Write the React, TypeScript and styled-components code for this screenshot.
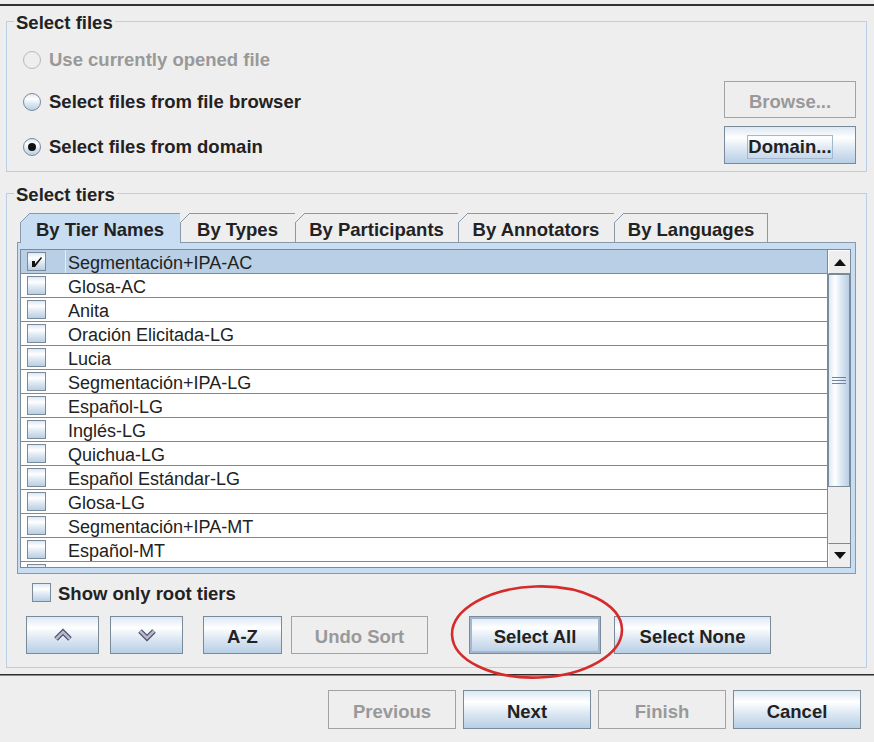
import React from "react";
import styled, { createGlobalStyle } from "styled-components";

const FONT = `"Liberation Sans", Arial, sans-serif`;
const LINE = "#8a99a9";
const DARK = "#7a8a99";
const GRAD = "#dde8f3 0%, #ffffff 30%, #dde8f3 60%, #b8cfe5 100%";

const GlobalStyle = createGlobalStyle`
  html, body { margin: 0; padding: 0; background: #eeeeee; }
  body { font-family: ${FONT}; }
  * { box-sizing: border-box; }
`;

const Page = styled.div`
  position: relative;
  width: 874px;
  height: 742px;
  background: #eeeeee;
  display: flex;
  flex-direction: column;
  color: #222222;
  overflow: hidden;
  font-family: ${FONT};
`;

const TopRule = styled.div`
  margin-top: 4px;
  height: 2px;
  background: #333333;
`;

const Main = styled.div`
  display: flex;
  flex-direction: column;
  padding: 0 7px 0 6px;
`;

const Group = styled.section<{ $mt: number }>`
  margin-top: ${(p) => p.$mt}px;
  border: 1px solid #b8cfe5;
  display: flex;
  flex-direction: column;
`;

const GroupTitle = styled.div`
  align-self: flex-start;
  margin: -11px 0 0 7px;
  padding: 2px 2px 0;
  height: 22px;
  background: linear-gradient(#eeeeee, #eeeeee) 0 0 / 100% 20px no-repeat;
  font: bold 18.5px/20px ${FONT};
  color: #222222;
`;

const FilesBody = styled.div`
  display: grid;
  grid-template-columns: 1fr 132px;
  grid-template-rows: 33px 37px 39px;
  row-gap: 7px;
  padding: 8px 10px 7px 16px;
  align-items: center;
`;

const RadioLabel = styled.label<{ $disabled?: boolean }>`
  grid-column: 1;
  display: flex;
  align-items: center;
  gap: 8px;
  padding-top: 4px;
  font: bold 18.5px/20px ${FONT};
  color: ${(p) => (p.$disabled ? "#999999" : "#222222")};
`;

const RadioDot = styled.span<{ $checked?: boolean; $disabled?: boolean }>`
  width: 18px;
  height: 18px;
  border-radius: 50%;
  border: 1px solid ${(p) => (p.$disabled ? "#b8b8b8" : DARK)};
  background: ${(p) => (p.$disabled ? "#eeeeee" : `linear-gradient(${GRAD})`)};
  display: flex;
  align-items: center;
  justify-content: center;
  &::after {
    content: "";
    width: 8px;
    height: 8px;
    border-radius: 50%;
    background: #111111;
    display: ${(p) => (p.$checked ? "block" : "none")};
  }
`;

const Button = styled.button<{ $w: number; $h?: number; $ring?: boolean }>`
  width: ${(p) => p.$w}px;
  height: ${(p) => p.$h ?? 38}px;
  padding: 4px 0 0;
  border: 1px solid ${DARK};
  border-radius: 0;
  background: linear-gradient(${GRAD});
  box-shadow: ${(p) => (p.$ring ? "inset 0 0 0 2px #a3b8cc" : "none")};
  font: bold 18.5px/20px ${FONT};
  color: #222222;
  display: flex;
  align-items: center;
  justify-content: center;
  &:disabled {
    background: #eeeeee;
    border-color: #a3a3a3;
    color: #999999;
  }
`;

const IconButton = styled(Button)`
  padding: 0;
`;

const FocusText = styled.span`
  border: 1px solid #a3b8cc;
  padding: 1px 0 1px;
  line-height: 20px;
`;

const SideButton = styled(Button)`
  grid-column: 2;
  justify-self: end;
  align-self: end;
`;

const TabPane = styled.div`
  margin: 8px 10px 0 10px;
  display: flex;
  flex-direction: column;
`;

const TabStrip = styled.div`
  display: flex;
  align-items: flex-start;
  height: 29px;
  padding-left: 3px;
`;

const tabBg = (selected?: boolean, last?: boolean) => {
  const fill = selected ? "#c8ddf2" : "#eeeeee";
  const layers = [
    `linear-gradient(${LINE}, ${LINE}) 10px 0 / 100% 1px no-repeat`,
    `linear-gradient(${LINE}, ${LINE}) 0 10px / 1px 100% no-repeat`,
  ];
  if (last) layers.push(`linear-gradient(${LINE}, ${LINE}) 100% 0 / 1px 100% no-repeat`);
  layers.push(
    `linear-gradient(135deg, transparent 6.6px, ${LINE} 6.6px, ${LINE} 7.7px, ${fill} 7.7px)`
  );
  return layers.join(", ");
};

const Tab = styled.div<{ $w: number; $selected?: boolean; $last?: boolean }>`
  position: relative;
  z-index: ${(p) => (p.$selected ? 1 : 0)};
  width: ${(p) => p.$w}px;
  height: ${(p) => (p.$selected ? 30 : 29)}px;
  padding-top: 4px;
  display: flex;
  align-items: center;
  justify-content: center;
  font: bold 18.5px/20px ${FONT};
  color: #222222;
  background: ${(p) => tabBg(p.$selected, p.$last)};
`;

const TabContent = styled.div`
  border: 1px solid ${LINE};
  background: #c8ddf2;
  padding: 6px 4px 5px 2px;
`;

const ScrollPane = styled.div`
  border: 1px solid ${DARK};
  height: 319px;
  display: flex;
  background: #ffffff;
`;

const RowList = styled.div`
  flex: 1;
  overflow: hidden;
  display: flex;
  flex-direction: column;
`;

const Row = styled.div<{ $selected?: boolean }>`
  flex-shrink: 0;
  height: 24px;
  display: flex;
  border-bottom: 1px solid ${DARK};
  background: ${(p) => (p.$selected ? "#b8cfe5" : "#ffffff")};
`;

const CheckCell = styled.div`
  width: 44px;
  display: flex;
  align-items: center;
  padding-left: 6px;
`;

const NameCell = styled.div<{ $selected?: boolean }>`
  flex: 1;
  display: flex;
  align-items: center;
  padding: 2px 0 0 2px;
  border-left: 1px solid ${(p) => (p.$selected ? "#e4eef8" : "transparent")};
  font: 18px/20px ${FONT};
  color: #222222;
`;

const Box = styled.span`
  width: 19px;
  height: 19px;
  flex-shrink: 0;
  border: 1px solid ${DARK};
  background: linear-gradient(${GRAD});
  display: flex;
  align-items: center;
  justify-content: center;
`;

const VScroll = styled.div`
  width: 23px;
  border-left: 1px solid ${DARK};
  display: flex;
  flex-direction: column;
  background: #eeeeee;
`;

const ScrollBtn = styled.div<{ $top?: boolean }>`
  height: 24px;
  flex-shrink: 0;
  display: flex;
  align-items: center;
  justify-content: center;
  background: #eeeeee;
  border-top: 1px solid ${(p) => (p.$top ? "#ffffff" : DARK)};
  border-left: 1px solid #ffffff;
  border-bottom: 1px solid ${(p) => (p.$top ? DARK : "transparent")};
`;

const Thumb = styled.div`
  height: 213px;
  flex-shrink: 0;
  border: 1px solid ${DARK};
  background: linear-gradient(to right, ${GRAD});
  display: flex;
  flex-direction: column;
  align-items: center;
  justify-content: center;
  gap: 2px;
`;

const Grip = styled.span`
  width: 14px;
  height: 1px;
  background: #6f84a0;
`;

const Track = styled.div`
  flex: 1;
  background: #eeeeee;
`;

const RootRow = styled.label`
  margin: 9px 0 0 25px;
  height: 19px;
  display: flex;
  align-items: center;
  gap: 7px;
  font: bold 18.5px/20px ${FONT};
  color: #222222;
`;

const RootText = styled.span`
  padding-top: 2px;
`;

const Toolbar = styled.div`
  display: flex;
  margin: 14px 0 13px 19px;
`;

const ToolGroup = styled.div<{ $gap: number; $ml?: number }>`
  display: flex;
  gap: ${(p) => p.$gap}px;
  margin-left: ${(p) => p.$ml ?? 0}px;
`;

const Separator = styled.div`
  margin-top: 6px;
  height: 1px;
  background: #2e2e2e;
  box-shadow: 0 1px 0 #8c8c8c;
`;

const Footer = styled.div`
  display: flex;
  justify-content: flex-end;
  gap: 7px;
  padding: 15px 13px 0 0;
`;

const Annotation = styled.svg`
  position: absolute;
  left: 448px;
  top: 584px;
  pointer-events: none;
`;

const Tick = () => (
  <svg width="13" height="13" viewBox="0 0 13 13">
    <path d="M2 6 L5 6 L5 9 L11 2 L12 3 L5 12 L2 12 Z" fill="#111" />
  </svg>
);

const ArrowUp = () => (
  <svg width="12" height="7" viewBox="0 0 12 7">
    <path d="M0 7 L6 0 L12 7 Z" fill="#111" />
  </svg>
);

const ArrowDown = () => (
  <svg width="12" height="7" viewBox="0 0 12 7">
    <path d="M0 0 L12 0 L6 7 Z" fill="#111" />
  </svg>
);

const Chevron = ({ up }: { up?: boolean }) => (
  <svg width="20" height="14" viewBox="0 0 20 14">
    <g transform={up ? undefined : "translate(0 14) scale(1 -1)"}>
      <polyline points="3,11 10,4 17,11" fill="none" stroke="#4d4d5e" strokeWidth="5" strokeLinejoin="miter" />
      <polyline points="3,11 10,4 17,11" fill="none" stroke="#b7b7d6" strokeWidth="2.6" strokeLinejoin="miter" />
    </g>
  </svg>
);

const tiers = [
  "Segmentación+IPA-AC",
  "Glosa-AC",
  "Anita",
  "Oración Elicitada-LG",
  "Lucia",
  "Segmentación+IPA-LG",
  "Español-LG",
  "Inglés-LG",
  "Quichua-LG",
  "Español Estándar-LG",
  "Glosa-LG",
  "Segmentación+IPA-MT",
  "Español-MT",
  "",
];

const tabs = [
  { label: "By Tier Names", w: 160 },
  { label: "By Types", w: 115 },
  { label: "By Participants", w: 163 },
  { label: "By Annotators", w: 156 },
  { label: "By Languages", w: 154 },
];

export default function App() {
  return (
    <Page>
      <GlobalStyle />
      <TopRule />
      <Main>
        <Group $mt={15}>
          <GroupTitle>Select files</GroupTitle>
          <FilesBody>
            <RadioLabel $disabled>
              <RadioDot $disabled />
              Use currently opened file
            </RadioLabel>
            <RadioLabel>
              <RadioDot />
              Select files from file browser
            </RadioLabel>
            <SideButton $w={132} $h={37} disabled>
              Browse...
            </SideButton>
            <RadioLabel>
              <RadioDot $checked />
              Select files from domain
            </RadioLabel>
            <SideButton $w={132} $h={38}>
              <FocusText>Domain...</FocusText>
            </SideButton>
          </FilesBody>
        </Group>

        <Group $mt={21}>
          <GroupTitle>Select tiers</GroupTitle>
          <TabPane>
            <TabStrip>
              {tabs.map((t, i) => (
                <Tab key={t.label} $w={t.w} $selected={i === 0} $last={i === tabs.length - 1}>
                  {t.label}
                </Tab>
              ))}
            </TabStrip>
            <TabContent>
              <ScrollPane>
                <RowList>
                  {tiers.map((name, i) => (
                    <Row key={i} $selected={i === 0}>
                      <CheckCell>
                        <Box>{i === 0 ? <Tick /> : null}</Box>
                      </CheckCell>
                      <NameCell $selected={i === 0}>{name}</NameCell>
                    </Row>
                  ))}
                </RowList>
                <VScroll>
                  <ScrollBtn $top>
                    <ArrowUp />
                  </ScrollBtn>
                  <Thumb>
                    <Grip />
                    <Grip />
                    <Grip />
                  </Thumb>
                  <Track />
                  <ScrollBtn>
                    <ArrowDown />
                  </ScrollBtn>
                </VScroll>
              </ScrollPane>
            </TabContent>
          </TabPane>
          <RootRow>
            <Box />
            <RootText>Show only root tiers</RootText>
          </RootRow>
          <Toolbar>
            <ToolGroup $gap={11}>
              <IconButton $w={73}>
                <Chevron up />
              </IconButton>
              <IconButton $w={73}>
                <Chevron />
              </IconButton>
            </ToolGroup>
            <ToolGroup $gap={9} $ml={20}>
              <Button $w={79}>A-Z</Button>
              <Button $w={137} disabled>
                Undo Sort
              </Button>
            </ToolGroup>
            <ToolGroup $gap={13} $ml={41}>
              <Button $w={132} $ring>
                Select All
              </Button>
              <Button $w={157}>Select None</Button>
            </ToolGroup>
          </Toolbar>
        </Group>
      </Main>
      <Separator />
      <Footer>
        <Button $w={128} $h={39} disabled>
          Previous
        </Button>
        <Button $w={128} $h={39}>
          Next
        </Button>
        <Button $w={128} $h={39} disabled>
          Finish
        </Button>
        <Button $w={128} $h={39}>
          Cancel
        </Button>
      </Footer>
      <Annotation width="180" height="100" viewBox="0 0 180 100">
        <ellipse cx="89" cy="48" rx="85" ry="45.5" fill="none" stroke="#d52b2b" strokeWidth="2.6" transform="rotate(-2 89 48)" />
      </Annotation>
    </Page>
  );
}
